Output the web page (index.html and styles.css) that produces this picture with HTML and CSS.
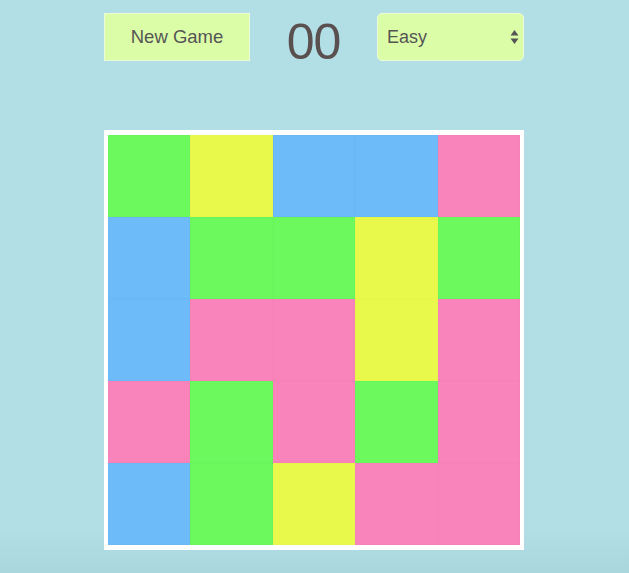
FILE: index.html
```html
<!DOCTYPE html>
<html>
<head>
<meta charset="utf-8">
<link rel="stylesheet" href="styles.css">
</head>
<body>
<div class="app">
  <div class="toolbar">
    <button class="new-game">New Game</button>
    <div class="score">00</div>
    <div class="select">
      <span class="select-label">Easy</span>
      <svg class="select-arrows" width="9" height="16" viewBox="0 0 9 16">
        <path d="M4.5 1 L8.5 6.5 L0.5 6.5 Z" fill="#555"/>
        <path d="M4.5 15 L8.5 9.5 L0.5 9.5 Z" fill="#555"/>
      </svg>
    </div>
  </div>
  <div class="board">
    <div class="cell green"></div><div class="cell yellow"></div><div class="cell blue"></div><div class="cell blue"></div><div class="cell pink"></div>
    <div class="cell blue"></div><div class="cell green"></div><div class="cell green"></div><div class="cell yellow"></div><div class="cell green"></div>
    <div class="cell blue"></div><div class="cell pink"></div><div class="cell pink"></div><div class="cell yellow"></div><div class="cell pink"></div>
    <div class="cell pink"></div><div class="cell green"></div><div class="cell pink"></div><div class="cell green"></div><div class="cell pink"></div>
    <div class="cell blue"></div><div class="cell green"></div><div class="cell yellow"></div><div class="cell pink"></div><div class="cell pink"></div>
  </div>
</div>
</body>
</html>
```
FILE: styles.css
```css
html, body {
  margin: 0;
  padding: 0;
}
body {
  width: 629px;
  height: 573px;
  overflow: hidden;
  background: linear-gradient(to bottom, #b2dfe5 0, #b2dfe5 530px, #a9d5dc 573px);
  font-family: "Liberation Sans", Arial, sans-serif;
}
.app {
  width: 420px;
  margin-left: 104px;
  padding-top: 13px;
  display: flex;
  flex-direction: column;
  gap: 69px;
}
.toolbar {
  display: flex;
  align-items: center;
  justify-content: space-between;
  height: 48px;
}
.new-game {
  width: 146px;
  height: 48px;
  margin: 0;
  padding: 0;
  background: #dcfda8;
  border: 1px solid #eefbd8;
  font-family: "Liberation Sans", Arial, sans-serif;
  font-size: 18.5px;
  color: #555;
}
.score {
  font-size: 50px;
  letter-spacing: -1px;
  color: #5a5050;
  line-height: 48px;
  margin-top: 9px;
}
.select {
  width: 136px;
  height: 46px;
  box-sizing: content-box;
  background: #dcfda8;
  border: 1px solid #eefbd8;
  border-radius: 5px;
  display: flex;
  align-items: center;
  justify-content: space-between;
  padding: 0 0 0 9px;
}
.select-label {
  font-size: 18px;
  color: #555;
}
.select-arrows {
  margin-right: 4px;
}
.board {
  width: 412px;
  height: 410px;
  border: 4px solid #ffffff;
  border-top-width: 5px;
  border-bottom-width: 5px;
  display: grid;
  grid-template-columns: repeat(5, 1fr);
  grid-template-rows: repeat(5, 1fr);
}
.cell {
  box-shadow: inset 0 0 0 0.5px rgba(0, 0, 0, 0.025);
}
.green { background: #6bf95e; }
.yellow { background: #e9f94c; }
.blue { background: #6dbbf9; }
.pink { background: #f984bb; }
```
